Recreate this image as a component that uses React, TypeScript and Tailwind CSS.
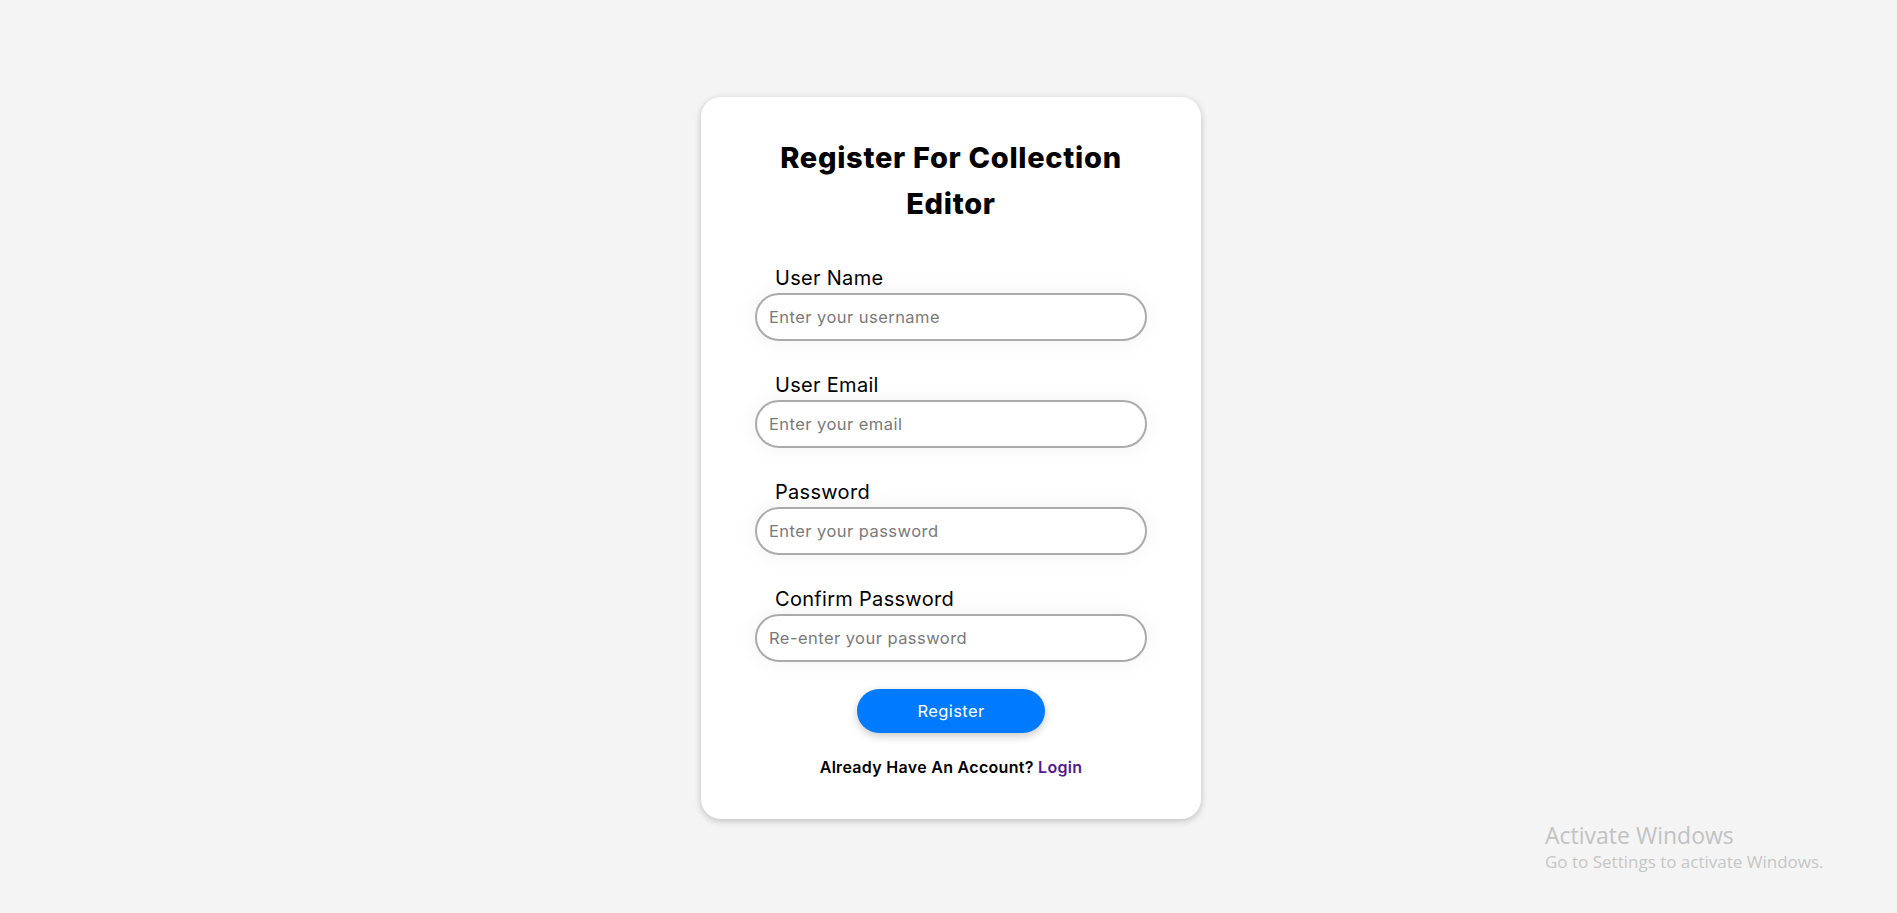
import React from "react";

const fields = [
  { label: "User Name", type: "text", placeholder: "Enter your username" },
  { label: "User Email", type: "email", placeholder: "Enter your email" },
  { label: "Password", type: "password", placeholder: "Enter your password" },
  { label: "Confirm Password", type: "password", placeholder: "Re-enter your password" },
];

export default function App() {
  return (
    <div className="relative min-h-screen w-full bg-[#f4f4f4] flex justify-center pl-[5px] font-['Inter',sans-serif]">
      <div className="mt-[97px] mb-[60px] w-[500px] self-start rounded-[20px] bg-white pt-[38px] pb-[40px] shadow-[0_2px_7px_rgba(0,0,0,0.22)]">
        <h1 className="mx-auto w-[410px] text-center text-[29px] font-extrabold leading-[46px] tracking-[0.7px] text-black">
          Register For Collection Editor
        </h1>
        <form className="mx-auto mt-[36px] flex w-[392px] flex-col" onSubmit={(e) => e.preventDefault()}>
          {fields.map((f) => (
            <div key={f.label} className="mb-[29px] flex flex-col">
              <label className="h-[30px] pl-[20px] text-[20px] leading-[30px] tracking-[0.3px] text-black">{f.label}</label>
              <input
                type={f.type}
                placeholder={f.placeholder}
                className="h-[48px] w-full rounded-full border-2 border-[#ababab] bg-white px-[12px] text-[16.5px] tracking-[0.45px] text-black outline-none placeholder:text-[#7a7a7a] shadow-[0_0_22px_rgba(0,0,0,0.06)]"
              />
            </div>
          ))}
          <button
            type="submit"
            className="mx-auto -mt-[2px] h-[44px] w-[188px] rounded-full bg-[#007bff] text-[16.5px] tracking-[0.4px] text-white shadow-[0_3px_8px_rgba(0,0,0,0.22)]"
          >
            Register
          </button>
          <p className="mt-[22px] text-center text-[16px] font-semibold leading-[24px] tracking-[0.3px] text-black">
            Already Have An Account? <a href="#" className="text-[#551a8b]">Login</a>
          </p>
        </form>
      </div>
      <div className="pointer-events-none absolute left-[1545px] top-[820px] font-['Open_Sans',sans-serif] text-[#c2c2c2]">
        <div className="text-[23px] leading-[30px]">Activate Windows</div>
        <div className="text-[17px] leading-[24px] text-[#c6c6c6]">Go to Settings to activate Windows.</div>
      </div>
    </div>
  );
}
